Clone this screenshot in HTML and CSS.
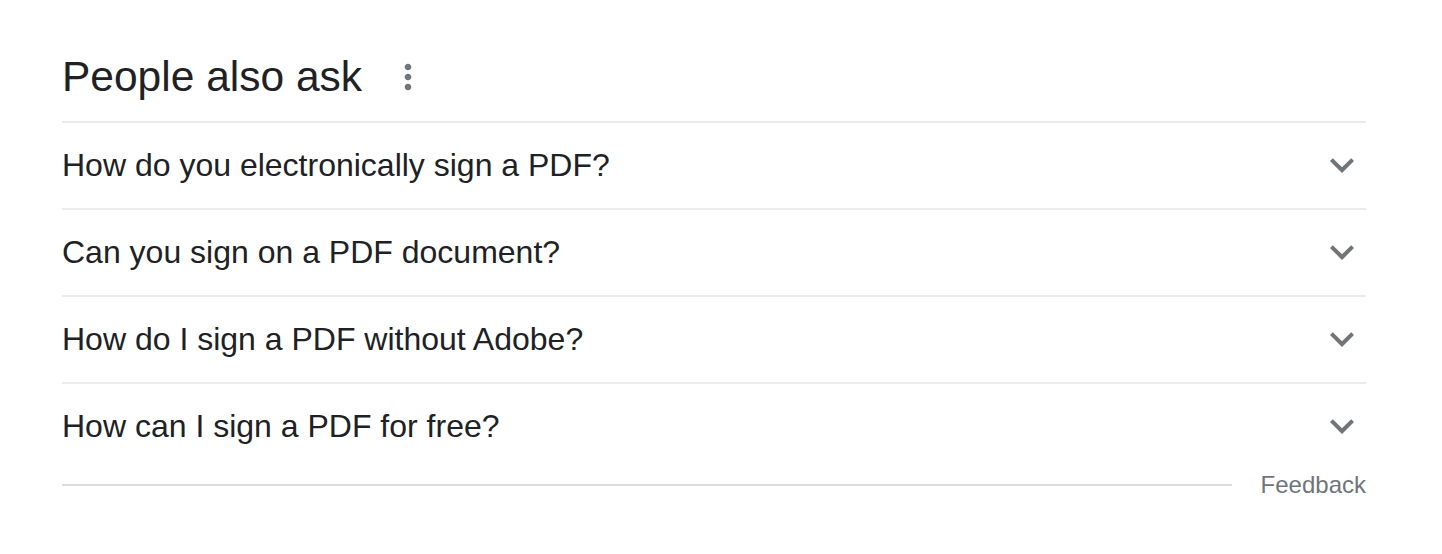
FILE: index.html
```html
<!DOCTYPE html>
<html lang="en">
<head>
    <meta charset="UTF-8">
    <meta name="viewport" content="width=device-width, initial-scale=1.0">
    <title>People also ask</title>
    <link rel="stylesheet" href="styles.css">
</head>
<body>
    <div class="paa">
        <div class="paa-head">
            <h2>People also ask</h2>
            <button class="more" type="button" aria-label="More options">
                <svg viewBox="0 0 24 24" width="40" height="40"><path d="M12 8c1.1 0 2-.9 2-2s-.9-2-2-2-2 .9-2 2 .9 2 2 2zm0 2c-1.1 0-2 .9-2 2s.9 2 2 2 2-.9 2-2-.9-2-2-2zm0 6c-1.1 0-2 .9-2 2s.9 2 2 2 2-.9 2-2-.9-2-2-2z"/></svg>
            </button>
        </div>
        <div class="question">
            <span>How do you electronically sign a PDF?</span>
            <svg class="chevron" viewBox="0 0 24 24" width="48" height="48"><path d="M16.59 8.59L12 13.17 7.41 8.59 6 10l6 6 6-6z"/></svg>
        </div>
        <div class="question">
            <span>Can you sign on a PDF document?</span>
            <svg class="chevron" viewBox="0 0 24 24" width="48" height="48"><path d="M16.59 8.59L12 13.17 7.41 8.59 6 10l6 6 6-6z"/></svg>
        </div>
        <div class="question">
            <span>How do I sign a PDF without Adobe?</span>
            <svg class="chevron" viewBox="0 0 24 24" width="48" height="48"><path d="M16.59 8.59L12 13.17 7.41 8.59 6 10l6 6 6-6z"/></svg>
        </div>
        <div class="question">
            <span>How can I sign a PDF for free?</span>
            <svg class="chevron" viewBox="0 0 24 24" width="48" height="48"><path d="M16.59 8.59L12 13.17 7.41 8.59 6 10l6 6 6-6z"/></svg>
        </div>
        <div class="paa-foot">
            <div class="rule"></div>
            <a href="#" class="feedback">Feedback</a>
        </div>
    </div>
</body>
</html>
```

FILE: styles.css
```css
body {
    font-family: 'Liberation Sans', Arial, sans-serif;
    background-color: #fff;
    color: #202124;
    margin: 0;
}
.paa {
    width: 1304px;
    padding: 49px 0 0 62px;
}
.paa-head {
    display: flex;
    align-items: center;
    height: 56px;
    padding-bottom: 16px;
}
.paa-head h2 {
    margin: 0;
    font-size: 42.5px;
    font-weight: 400;
    line-height: 52px;
}
.more {
    display: flex;
    margin-left: 26px;
    padding: 0;
    border: none;
    background: none;
    fill: #70757a;
    cursor: pointer;
}
.question {
    display: flex;
    align-items: center;
    justify-content: space-between;
    height: 85px;
    border-top: 2px solid #ebebeb;
    font-size: 32px;
}
.chevron {
    fill: #70757a;
    margin-top: -2px;
}
.paa-foot {
    display: flex;
    align-items: center;
    margin-top: 1px;
    height: 30px;
}
.rule {
    flex: 1;
    height: 2px;
    background-color: #dadce0;
    margin-right: 29px;
}
.feedback {
    font-size: 24px;
    color: #70757a;
    text-decoration: none;
}
```
